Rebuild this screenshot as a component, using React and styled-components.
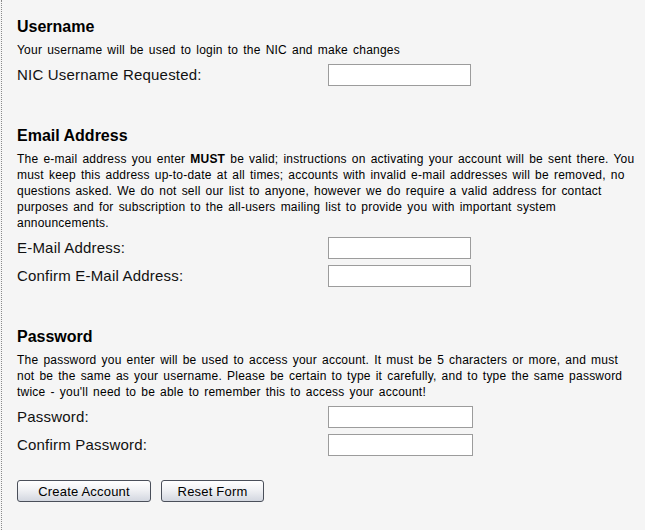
import styled, { createGlobalStyle } from 'styled-components'

const GlobalStyle = createGlobalStyle`
  html, body {
    margin: 0;
    padding: 0;
    background: #f5f5f5;
  }
  body {
    font-family: "Liberation Sans", Arial, sans-serif;
    color: #000;
  }
`

const sections = [
  {
    title: 'Username',
    text: <>Your username will be used to login to the NIC and make changes</>,
    fields: [{ label: 'NIC Username Requested:', name: 'username' }],
  },
  {
    title: 'Email Address',
    text: (
      <>
        The e-mail address you enter <b>MUST</b> be valid; instructions on
        activating your account will be sent there. You must keep this address
        up-to-date at all times; accounts with invalid e-mail addresses will be
        removed, no questions asked. We do not sell our list to anyone, however
        we do require a valid address for contact purposes and for subscription
        to the all-users mailing list to provide you with important system
        announcements.
      </>
    ),
    fields: [
      { label: 'E-Mail Address:', name: 'email' },
      { label: 'Confirm E-Mail Address:', name: 'email2' },
    ],
  },
  {
    title: 'Password',
    text: (
      <>
        The password you enter will be used to access your account. It must be
        5 characters or more, and must not be the same as your username. Please
        be certain to type it carefully, and to type the same password twice -
        you'll need to be able to remember this to access your account!
      </>
    ),
    fields: [
      { label: 'Password:', name: 'password', type: 'password', wide: true },
      { label: 'Confirm Password:', name: 'password2', type: 'password', wide: true },
    ],
  },
]

export default function App() {
  return (
    <>
      <GlobalStyle />
      <Page>
        <Form onSubmit={(e) => e.preventDefault()}>
          {sections.map((s) => (
            <Section key={s.title}>
              <Heading>{s.title}</Heading>
              <Description>{s.text}</Description>
              <Fields>
                {s.fields.map((f) => (
                  <Row key={f.name}>
                    <Label htmlFor={f.name}>{f.label}</Label>
                    <Input id={f.name} type={f.type || 'text'} $wide={f.wide} />
                  </Row>
                ))}
              </Fields>
            </Section>
          ))}
          <Buttons>
            <Button type="submit" $width={134}>Create Account</Button>
            <Button type="reset" $width={103}>Reset Form</Button>
          </Buttons>
        </Form>
      </Page>
    </>
  )
}

const Page = styled.div`
  min-height: 530px;
  margin-left: 1px;
  border-left: 1px dotted #8a8a8a;
  box-sizing: border-box;
  padding: 17px 5px 20px 15px;
`

const Form = styled.form`
  display: flex;
  flex-direction: column;
`

const Section = styled.section`
  display: flex;
  flex-direction: column;
  & + & {
    margin-top: 37px;
  }
`

const Heading = styled.h2`
  margin: 0 0 5px;
  font-size: 16px;
  line-height: 20px;
  font-weight: bold;
`

const Description = styled.p`
  width: 619px;
  margin: 0 0 3px;
  font-size: 12px;
  line-height: 16px;
  letter-spacing: 0.22px;
  word-spacing: 1.5px;
`

const Fields = styled.div`
  display: flex;
  flex-direction: column;
`

const Row = styled.div`
  display: grid;
  grid-template-columns: 311px auto;
  align-items: center;
  height: 28px;
`

const Label = styled.label`
  font-size: 15px;
  line-height: 18px;
  letter-spacing: 0.2px;
  color: #111;
`

const Input = styled.input`
  box-sizing: border-box;
  width: ${({ $wide }) => ($wide ? 145 : 143)}px;
  height: 22px;
  margin: 0;
  border: 1px solid #9c9c9c;
  background: #fff;
  padding: 1px 3px;
  font: 13px "Liberation Sans", Arial, sans-serif;
`

const Buttons = styled.div`
  display: flex;
  gap: 10px;
  margin-top: 21px;
`

const Button = styled.button`
  box-sizing: border-box;
  width: ${({ $width }) => $width}px;
  height: 22px;
  padding: 0;
  border: 1px solid #4a4f5a;
  border-radius: 3px;
  background: linear-gradient(#ffffff, #f0f1f4 45%, #d3d7e0);
  font: 13px "Liberation Sans", Arial, sans-serif;
  letter-spacing: 0.2px;
  color: #000;
  cursor: pointer;
`
